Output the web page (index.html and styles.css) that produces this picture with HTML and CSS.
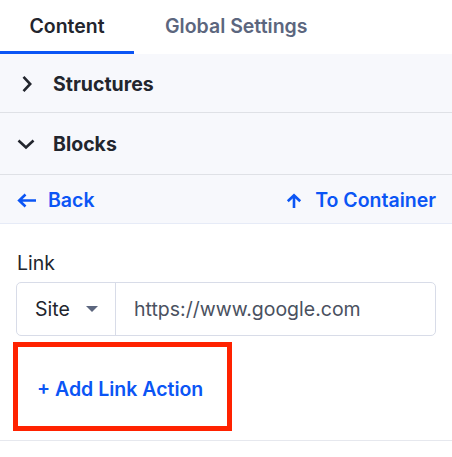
FILE: index.html
```html
<!DOCTYPE html>
<html lang="en">

<head>
    <meta charset="UTF-8">
    <meta name="viewport" content="width=device-width, initial-scale=1.0">
    <title>Link Settings</title>
    <link rel="stylesheet" href="styles.css">
</head>

<body>

    <nav class="tabs">
        <div class="tab active">Content</div>
        <div class="tab">Global Settings</div>
    </nav>

    <section class="panel">
        <div class="accordion first">
            <svg class="chevron" width="18" height="18" viewBox="0 0 18 18">
                <path d="M6.5 1.8 L13.2 9 L6.5 16.2" fill="none" stroke="currentColor" stroke-width="2.6" />
            </svg>
            <span>Structures</span>
        </div>
        <div class="accordion">
            <svg class="chevron" width="18" height="18" viewBox="0 0 18 18">
                <path d="M1.5 5.5 L9 12.5 L16.5 5.5" fill="none" stroke="currentColor" stroke-width="2.6" />
            </svg>
            <span>Blocks</span>
        </div>
        <div class="crumbs">
            <a class="crumb">
                <svg width="19" height="15" viewBox="0 0 19 15">
                    <path d="M19 7.5 H3 M8.5 1.5 L2.2 7.5 L8.5 13.5" fill="none" stroke="currentColor" stroke-width="2.6" />
                </svg>
                Back
            </a>
            <a class="crumb up">
                <svg width="16" height="15" viewBox="0 0 16 15">
                    <path d="M8 15 V3 M1.8 8.3 L8 2.2 L14.2 8.3" fill="none" stroke="currentColor" stroke-width="2.6" />
                </svg>
                To Container
            </a>
        </div>
    </section>

    <main class="fields">
        <label class="field-label" for="linkUrl">Link</label>
        <div class="input-group">
            <div class="type-select">
                Site
                <span class="caret"></span>
            </div>
            <input id="linkUrl" class="url" type="text" value="https://www.google.com">
        </div>
        <button class="add-action">+ Add Link Action</button>
    </main>

    <div class="divider"></div>

</body>

</html>
```

FILE: styles.css
```css
* {
    box-sizing: border-box;
}

body {
    font-family: 'Inter', 'Liberation Sans', sans-serif;
    font-size: 19.5px;
    margin: 0;
    padding: 0;
    background-color: #fff;
    color: #22252d;
    width: 452px;
}

.tabs {
    display: flex;
    height: 54px;
    border-bottom: 3px solid transparent;
}

.tab {
    display: flex;
    align-items: center;
    justify-content: center;
    font-weight: 600;
    color: #5c667e;
    padding: 0 15px;
    margin-bottom: -3px;
    border-bottom: 3px solid transparent;
}

.tab.active {
    width: 134px;
    padding: 0;
    color: #22252d;
    border-bottom-color: #0b55f5;
}

.tab:nth-child(2) {
    padding-left: 31px;
}

.panel {
    background-color: #f7f8fc;
}

.accordion {
    display: flex;
    align-items: center;
    gap: 18px;
    height: 62px;
    padding: 1px 0 0 17px;
    font-weight: 700;
    border-bottom: 1px solid #dfe1e6;
}

.accordion.first {
    height: 59px;
}

.chevron {
    color: #22252d;
}

.crumbs {
    display: flex;
    justify-content: space-between;
    align-items: center;
    height: 49px;
    padding: 2px 16px 0 17px;
    border-bottom: 1px solid #e6ebf7;
}

.crumb {
    display: flex;
    align-items: center;
    gap: 12px;
    color: #0b55f5;
    font-weight: 600;
}

.crumb.up {
    gap: 13px;
}

.fields {
    padding: 27px 16px 0 16px;
}

.field-label {
    display: block;
    margin-left: 1px;
    margin-bottom: 7px;
}

.input-group {
    display: flex;
    height: 54px;
    border: 1px solid #d8dce8;
    border-radius: 5px;
}

.type-select {
    display: flex;
    flex-shrink: 0;
    align-items: center;
    gap: 16px;
    width: 99px;
    padding-left: 18px;
    border-right: 1px solid #d8dce8;
}

.caret {
    width: 0;
    height: 0;
    border-left: 6px solid transparent;
    border-right: 6px solid transparent;
    border-top: 6px solid #5c667e;
}

.url {
    flex: 1;
    min-width: 0;
    border: none;
    background: transparent;
    padding: 0 18px;
    font-family: inherit;
    font-size: inherit;
    color: #4a5160;
    outline: none;
}

.add-action {
    display: block;
    margin: 6px 0 0 -3px;
    width: 219px;
    height: 89px;
    padding: 5px 0 0 19px;
    text-align: left;
    background: #fff;
    border: 5px solid #ff2200;
    font-family: inherit;
    font-size: inherit;
    font-weight: 600;
    color: #0b55f5;
}

.divider {
    margin-top: 9px;
    height: 1px;
    background-color: #e6e8ee;
}
```
